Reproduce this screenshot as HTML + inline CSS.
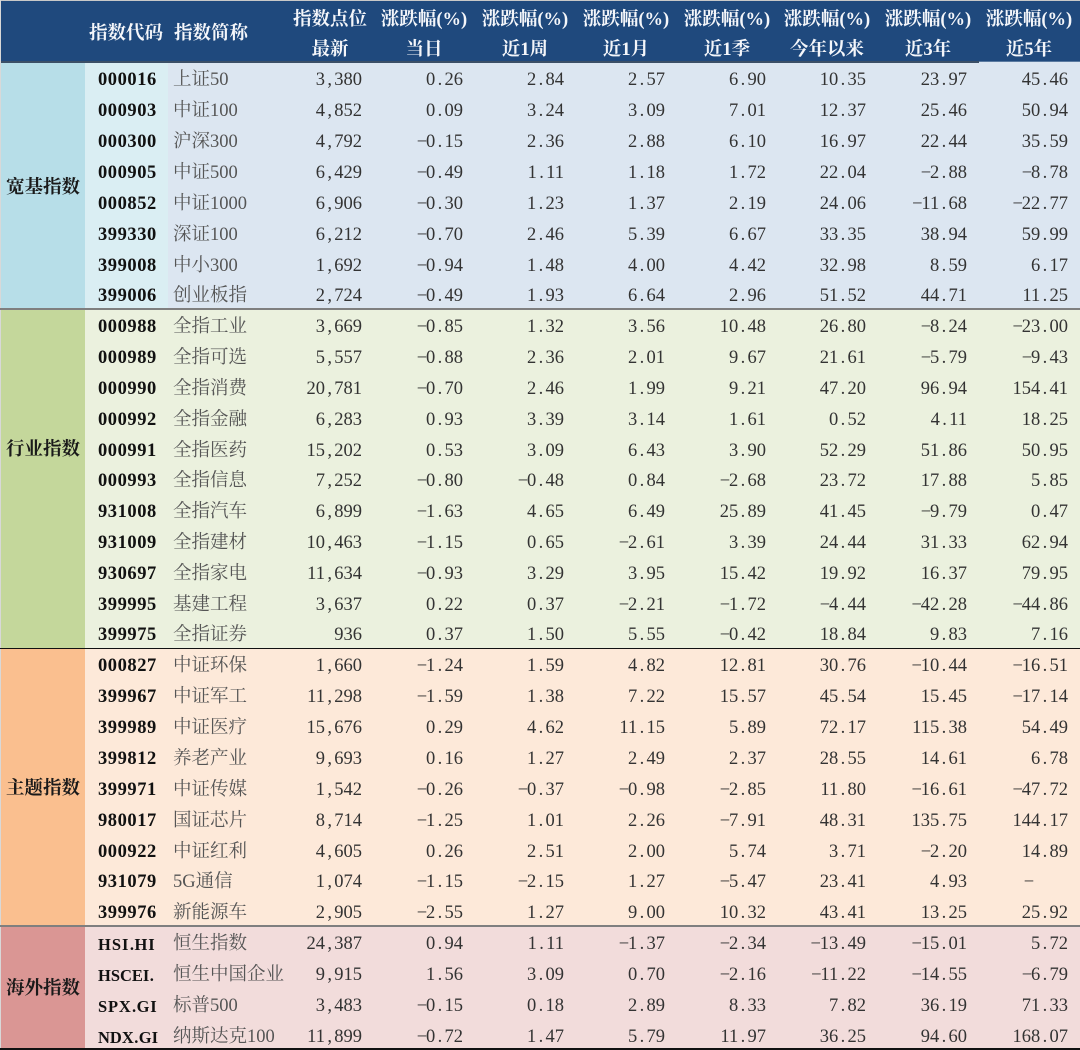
<!DOCTYPE html>
<html lang="zh"><head><meta charset="utf-8"><title>指数涨跌幅</title>
<style>
*{margin:0;padding:0;box-sizing:border-box}
html,body{width:1080px;height:1050px;overflow:hidden;background:#fff}
body{position:relative;font:18.5px/30px "Liberation Serif","Noto Serif CJK SC",serif;color:#333;filter:blur(.3px)}
.bg{position:absolute}
.h{position:absolute;color:#f4f6fa;font-weight:700;text-align:center;white-space:nowrap;line-height:24px;font-size:18.5px;margin-top:2px}
.g{position:absolute;left:1px;width:84px;text-align:center;font-weight:700;color:#1a1a1a;white-space:nowrap;font-size:18.5px;line-height:24px;margin-top:2px}
.r{position:absolute;left:0;width:1080px;height:31px;line-height:31px;white-space:nowrap;margin-top:1px}
.r b,.r u,.r span{position:absolute;top:0;text-decoration:none}
.r b{left:98px;width:74px;overflow:hidden;color:#111;letter-spacing:.55px}
.r b.l{font-size:16.5px;letter-spacing:0}
.r b i{width:5px}
.r u{left:173px;width:111px;overflow:hidden;color:#555}
.r span{text-align:right;width:100px}
.r span:nth-of-type(1){left:262px}
.r span:nth-of-type(2){left:363px}
.r span:nth-of-type(3){left:464px}
.r span:nth-of-type(4){left:565px}
.r span:nth-of-type(5){left:666px}
.r span:nth-of-type(6){left:766px}
.r span:nth-of-type(7){left:867px}
.r span:nth-of-type(8){left:968px}
i{display:inline-block;width:9.25px;text-align:center;font-style:normal;letter-spacing:0}
</style></head><body>
<div class="bg" style="left:1px;top:1px;width:1079px;height:61px;background:#1f497d"></div>
<div class="bg" style="left:0;top:0;width:1080px;height:1px;background:#c8c8c8"></div>
<div class="bg" style="left:0;top:0;width:1px;height:1050px;background:#d8d8d8"></div>

<div class="bg" style="left:1px;top:62px;width:84px;height:246px;background:#b7dee8"></div>
<div class="bg" style="left:85px;top:62px;width:83px;height:246px;background:#daeef3"></div>
<div class="bg" style="left:168px;top:62px;width:912px;height:246px;background:#dce6f1"></div>
<div class="bg" style="left:1px;top:308px;width:84px;height:340px;background:#c4d79b"></div>
<div class="bg" style="left:85px;top:308px;width:995px;height:340px;background:#ebf1de"></div>
<div class="bg" style="left:1px;top:648px;width:84px;height:278px;background:#fabf8f"></div>
<div class="bg" style="left:85px;top:648px;width:995px;height:278px;background:#fde9d9"></div>
<div class="bg" style="left:1px;top:926px;width:84px;height:124px;background:#da9694"></div>
<div class="bg" style="left:85px;top:926px;width:995px;height:124px;background:#f2dcdb"></div>

<div class="bg" style="left:1px;top:61px;width:978px;height:2px;background:#3b4f66"></div>
<div class="bg" style="left:979px;top:61px;width:101px;height:1px;background:#5a7aa0"></div>
<div class="bg" style="left:0;top:308px;width:1080px;height:2px;background:#7f7f7f"></div>
<div class="bg" style="left:0;top:648px;width:1080px;height:1px;background:#111"></div>
<div class="bg" style="left:0;top:925px;width:1080px;height:2px;background:#7f7f7f"></div>
<div class="bg" style="left:0;top:1048px;width:1080px;height:2px;background:#111"></div>

<div class="h" style="left:89px;top:20px">指数代码</div>
<div class="h" style="left:174px;top:20px">指数简称</div>
<div class="h" style="left:280px;width:100px;top:6px">指数点位</div>
<div class="h" style="left:280px;width:100px;top:36px">最新</div>
<div class="h" style="left:374px;width:100px;top:6px">涨跌幅(%)</div>
<div class="h" style="left:374px;width:100px;top:36px">当日</div>
<div class="h" style="left:475px;width:100px;top:6px">涨跌幅(%)</div>
<div class="h" style="left:475px;width:100px;top:36px">近1周</div>
<div class="h" style="left:576px;width:100px;top:6px">涨跌幅(%)</div>
<div class="h" style="left:576px;width:100px;top:36px">近1月</div>
<div class="h" style="left:677px;width:100px;top:6px">涨跌幅(%)</div>
<div class="h" style="left:677px;width:100px;top:36px">近1季</div>
<div class="h" style="left:777px;width:100px;top:6px">涨跌幅(%)</div>
<div class="h" style="left:777px;width:100px;top:36px">今年以来</div>
<div class="h" style="left:878px;width:100px;top:6px">涨跌幅(%)</div>
<div class="h" style="left:878px;width:100px;top:36px">近3年</div>
<div class="h" style="left:979px;width:100px;top:6px">涨跌幅(%)</div>
<div class="h" style="left:979px;width:100px;top:36px">近5年</div>

<div class="g" style="top:174px">宽基指数</div>
<div class="g" style="top:436px">行业指数</div>
<div class="g" style="top:775px">主题指数</div>
<div class="g" style="top:975px">海外指数</div>

<div class="r" style="top:64px"><b>000016</b><u>上证50</u><span>3<i>,</i>380</span><span>0<i>.</i>26</span><span>2<i>.</i>84</span><span>2<i>.</i>57</span><span>6<i>.</i>90</span><span>10<i>.</i>35</span><span>23<i>.</i>97</span><span>45<i>.</i>46</span></div>
<div class="r" style="top:95px"><b>000903</b><u>中证100</u><span>4<i>,</i>852</span><span>0<i>.</i>09</span><span>3<i>.</i>24</span><span>3<i>.</i>09</span><span>7<i>.</i>01</span><span>12<i>.</i>37</span><span>25<i>.</i>46</span><span>50<i>.</i>94</span></div>
<div class="r" style="top:126px"><b>000300</b><u>沪深300</u><span>4<i>,</i>792</span><span><i>−</i>0<i>.</i>15</span><span>2<i>.</i>36</span><span>2<i>.</i>88</span><span>6<i>.</i>10</span><span>16<i>.</i>97</span><span>22<i>.</i>44</span><span>35<i>.</i>59</span></div>
<div class="r" style="top:157px"><b>000905</b><u>中证500</u><span>6<i>,</i>429</span><span><i>−</i>0<i>.</i>49</span><span>1<i>.</i>11</span><span>1<i>.</i>18</span><span>1<i>.</i>72</span><span>22<i>.</i>04</span><span><i>−</i>2<i>.</i>88</span><span><i>−</i>8<i>.</i>78</span></div>
<div class="r" style="top:188px"><b>000852</b><u>中证1000</u><span>6<i>,</i>906</span><span><i>−</i>0<i>.</i>30</span><span>1<i>.</i>23</span><span>1<i>.</i>37</span><span>2<i>.</i>19</span><span>24<i>.</i>06</span><span><i>−</i>11<i>.</i>68</span><span><i>−</i>22<i>.</i>77</span></div>
<div class="r" style="top:219px"><b>399330</b><u>深证100</u><span>6<i>,</i>212</span><span><i>−</i>0<i>.</i>70</span><span>2<i>.</i>46</span><span>5<i>.</i>39</span><span>6<i>.</i>67</span><span>33<i>.</i>35</span><span>38<i>.</i>94</span><span>59<i>.</i>99</span></div>
<div class="r" style="top:250px"><b>399008</b><u>中小300</u><span>1<i>,</i>692</span><span><i>−</i>0<i>.</i>94</span><span>1<i>.</i>48</span><span>4<i>.</i>00</span><span>4<i>.</i>42</span><span>32<i>.</i>98</span><span>8<i>.</i>59</span><span>6<i>.</i>17</span></div>
<div class="r" style="top:280px"><b>399006</b><u>创业板指</u><span>2<i>,</i>724</span><span><i>−</i>0<i>.</i>49</span><span>1<i>.</i>93</span><span>6<i>.</i>64</span><span>2<i>.</i>96</span><span>51<i>.</i>52</span><span>44<i>.</i>71</span><span>11<i>.</i>25</span></div>
<div class="r" style="top:311px"><b>000988</b><u>全指工业</u><span>3<i>,</i>669</span><span><i>−</i>0<i>.</i>85</span><span>1<i>.</i>32</span><span>3<i>.</i>56</span><span>10<i>.</i>48</span><span>26<i>.</i>80</span><span><i>−</i>8<i>.</i>24</span><span><i>−</i>23<i>.</i>00</span></div>
<div class="r" style="top:342px"><b>000989</b><u>全指可选</u><span>5<i>,</i>557</span><span><i>−</i>0<i>.</i>88</span><span>2<i>.</i>36</span><span>2<i>.</i>01</span><span>9<i>.</i>67</span><span>21<i>.</i>61</span><span><i>−</i>5<i>.</i>79</span><span><i>−</i>9<i>.</i>43</span></div>
<div class="r" style="top:373px"><b>000990</b><u>全指消费</u><span>20<i>,</i>781</span><span><i>−</i>0<i>.</i>70</span><span>2<i>.</i>46</span><span>1<i>.</i>99</span><span>9<i>.</i>21</span><span>47<i>.</i>20</span><span>96<i>.</i>94</span><span>154<i>.</i>41</span></div>
<div class="r" style="top:404px"><b>000992</b><u>全指金融</u><span>6<i>,</i>283</span><span>0<i>.</i>93</span><span>3<i>.</i>39</span><span>3<i>.</i>14</span><span>1<i>.</i>61</span><span>0<i>.</i>52</span><span>4<i>.</i>11</span><span>18<i>.</i>25</span></div>
<div class="r" style="top:435px"><b>000991</b><u>全指医药</u><span>15<i>,</i>202</span><span>0<i>.</i>53</span><span>3<i>.</i>09</span><span>6<i>.</i>43</span><span>3<i>.</i>90</span><span>52<i>.</i>29</span><span>51<i>.</i>86</span><span>50<i>.</i>95</span></div>
<div class="r" style="top:465px"><b>000993</b><u>全指信息</u><span>7<i>,</i>252</span><span><i>−</i>0<i>.</i>80</span><span><i>−</i>0<i>.</i>48</span><span>0<i>.</i>84</span><span><i>−</i>2<i>.</i>68</span><span>23<i>.</i>72</span><span>17<i>.</i>88</span><span>5<i>.</i>85</span></div>
<div class="r" style="top:496px"><b>931008</b><u>全指汽车</u><span>6<i>,</i>899</span><span><i>−</i>1<i>.</i>63</span><span>4<i>.</i>65</span><span>6<i>.</i>49</span><span>25<i>.</i>89</span><span>41<i>.</i>45</span><span><i>−</i>9<i>.</i>79</span><span>0<i>.</i>47</span></div>
<div class="r" style="top:527px"><b>931009</b><u>全指建材</u><span>10<i>,</i>463</span><span><i>−</i>1<i>.</i>15</span><span>0<i>.</i>65</span><span><i>−</i>2<i>.</i>61</span><span>3<i>.</i>39</span><span>24<i>.</i>44</span><span>31<i>.</i>33</span><span>62<i>.</i>94</span></div>
<div class="r" style="top:558px"><b>930697</b><u>全指家电</u><span>11<i>,</i>634</span><span><i>−</i>0<i>.</i>93</span><span>3<i>.</i>29</span><span>3<i>.</i>95</span><span>15<i>.</i>42</span><span>19<i>.</i>92</span><span>16<i>.</i>37</span><span>79<i>.</i>95</span></div>
<div class="r" style="top:589px"><b>399995</b><u>基建工程</u><span>3<i>,</i>637</span><span>0<i>.</i>22</span><span>0<i>.</i>37</span><span><i>−</i>2<i>.</i>21</span><span><i>−</i>1<i>.</i>72</span><span><i>−</i>4<i>.</i>44</span><span><i>−</i>42<i>.</i>28</span><span><i>−</i>44<i>.</i>86</span></div>
<div class="r" style="top:619px"><b>399975</b><u>全指证券</u><span>936</span><span>0<i>.</i>37</span><span>1<i>.</i>50</span><span>5<i>.</i>55</span><span><i>−</i>0<i>.</i>42</span><span>18<i>.</i>84</span><span>9<i>.</i>83</span><span>7<i>.</i>16</span></div>
<div class="r" style="top:650px"><b>000827</b><u>中证环保</u><span>1<i>,</i>660</span><span><i>−</i>1<i>.</i>24</span><span>1<i>.</i>59</span><span>4<i>.</i>82</span><span>12<i>.</i>81</span><span>30<i>.</i>76</span><span><i>−</i>10<i>.</i>44</span><span><i>−</i>16<i>.</i>51</span></div>
<div class="r" style="top:681px"><b>399967</b><u>中证军工</u><span>11<i>,</i>298</span><span><i>−</i>1<i>.</i>59</span><span>1<i>.</i>38</span><span>7<i>.</i>22</span><span>15<i>.</i>57</span><span>45<i>.</i>54</span><span>15<i>.</i>45</span><span><i>−</i>17<i>.</i>14</span></div>
<div class="r" style="top:712px"><b>399989</b><u>中证医疗</u><span>15<i>,</i>676</span><span>0<i>.</i>29</span><span>4<i>.</i>62</span><span>11<i>.</i>15</span><span>5<i>.</i>89</span><span>72<i>.</i>17</span><span>115<i>.</i>38</span><span>54<i>.</i>49</span></div>
<div class="r" style="top:743px"><b>399812</b><u>养老产业</u><span>9<i>,</i>693</span><span>0<i>.</i>16</span><span>1<i>.</i>27</span><span>2<i>.</i>49</span><span>2<i>.</i>37</span><span>28<i>.</i>55</span><span>14<i>.</i>61</span><span>6<i>.</i>78</span></div>
<div class="r" style="top:774px"><b>399971</b><u>中证传媒</u><span>1<i>,</i>542</span><span><i>−</i>0<i>.</i>26</span><span><i>−</i>0<i>.</i>37</span><span><i>−</i>0<i>.</i>98</span><span><i>−</i>2<i>.</i>85</span><span>11<i>.</i>80</span><span><i>−</i>16<i>.</i>61</span><span><i>−</i>47<i>.</i>72</span></div>
<div class="r" style="top:805px"><b>980017</b><u>国证芯片</u><span>8<i>,</i>714</span><span><i>−</i>1<i>.</i>25</span><span>1<i>.</i>01</span><span>2<i>.</i>26</span><span><i>−</i>7<i>.</i>91</span><span>48<i>.</i>31</span><span>135<i>.</i>75</span><span>144<i>.</i>17</span></div>
<div class="r" style="top:836px"><b>000922</b><u>中证红利</u><span>4<i>,</i>605</span><span>0<i>.</i>26</span><span>2<i>.</i>51</span><span>2<i>.</i>00</span><span>5<i>.</i>74</span><span>3<i>.</i>71</span><span><i>−</i>2<i>.</i>20</span><span>14<i>.</i>89</span></div>
<div class="r" style="top:866px"><b>931079</b><u>5G通信</u><span>1<i>,</i>074</span><span><i>−</i>1<i>.</i>15</span><span><i>−</i>2<i>.</i>15</span><span>1<i>.</i>27</span><span><i>−</i>5<i>.</i>47</span><span>23<i>.</i>41</span><span>4<i>.</i>93</span><span><i>−</i><i style="width:35px"></i></span></div>
<div class="r" style="top:897px"><b>399976</b><u>新能源车</u><span>2<i>,</i>905</span><span><i>−</i>2<i>.</i>55</span><span>1<i>.</i>27</span><span>9<i>.</i>00</span><span>10<i>.</i>32</span><span>43<i>.</i>41</span><span>13<i>.</i>25</span><span>25<i>.</i>92</span></div>
<div class="r" style="top:928px"><b class="l" style="letter-spacing:1px">HSI<i>.</i>HI</b><u>恒生指数</u><span>24<i>,</i>387</span><span>0<i>.</i>94</span><span>1<i>.</i>11</span><span><i>−</i>1<i>.</i>37</span><span><i>−</i>2<i>.</i>34</span><span><i>−</i>13<i>.</i>49</span><span><i>−</i>15<i>.</i>01</span><span>5<i>.</i>72</span></div>
<div class="r" style="top:959px"><b class="l">HSCEI<i>.</i></b><u>恒生中国企业:</u><span>9<i>,</i>915</span><span>1<i>.</i>56</span><span>3<i>.</i>09</span><span>0<i>.</i>70</span><span><i>−</i>2<i>.</i>16</span><span><i>−</i>11<i>.</i>22</span><span><i>−</i>14<i>.</i>55</span><span><i>−</i>6<i>.</i>79</span></div>
<div class="r" style="top:990px"><b class="l" style="letter-spacing:.8px">SPX<i>.</i>GI</b><u>标普500</u><span>3<i>,</i>483</span><span><i>−</i>0<i>.</i>15</span><span>0<i>.</i>18</span><span>2<i>.</i>89</span><span>8<i>.</i>33</span><span>7<i>.</i>82</span><span>36<i>.</i>19</span><span>71<i>.</i>33</span></div>
<div class="r" style="top:1021px"><b class="l">NDX<i>.</i>GI</b><u>纳斯达克100</u><span>11<i>,</i>899</span><span><i>−</i>0<i>.</i>72</span><span>1<i>.</i>47</span><span>5<i>.</i>79</span><span>11<i>.</i>97</span><span>36<i>.</i>25</span><span>94<i>.</i>60</span><span>168<i>.</i>07</span></div>
</body></html>
